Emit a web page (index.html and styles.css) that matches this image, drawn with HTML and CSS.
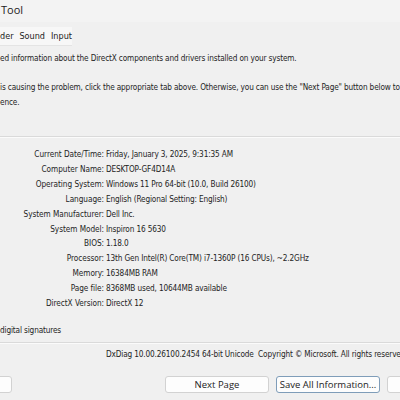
FILE: index.html
```html
<!DOCTYPE html>
<html lang="en">
<head>
  <meta charset="UTF-8">
  <title>DirectX Diagnostic Tool</title>
  <link rel="stylesheet" href="styles.css">
</head>
<body>
  <div class="dx-window">
    <!-- title bar -->
    <div class="dx-titlebar">Tool</div>
    <!-- tabs -->
    <div class="dx-tabs">
      <div class="dx-tabstrip">
        <span class="dx-tab">der</span>
        <span class="dx-tab">Sound</span>
        <span class="dx-tab">Input</span>
      </div>
    </div>
    <div class="dx-panel">
      <p class="dx-intro">ed information about the DirectX components and drivers installed on your system.</p>
      <p class="dx-help"> is causing the problem, click the appropriate tab above. Otherwise, you can use the "Next Page" button below to<br>ence.</p>
      <div class="dx-sep"></div>
      <div class="dx-info">
        <div class="dx-label">Current Date/Time:</div><div class="dx-value">Friday, January 3, 2025, 9:31:35 AM</div>
        <div class="dx-label">Computer Name:</div><div class="dx-value">DESKTOP-GF4D14A</div>
        <div class="dx-label">Operating System:</div><div class="dx-value">Windows 11 Pro 64-bit (10.0, Build 26100)</div>
        <div class="dx-label">Language:</div><div class="dx-value">English (Regional Setting: English)</div>
        <div class="dx-label">System Manufacturer:</div><div class="dx-value">Dell Inc.</div>
        <div class="dx-label">System Model:</div><div class="dx-value">Inspiron 16 5630</div>
        <div class="dx-label">BIOS:</div><div class="dx-value">1.18.0</div>
        <div class="dx-label">Processor:</div><div class="dx-value">13th Gen Intel(R) Core(TM) i7-1360P (16 CPUs), ~2.2GHz</div>
        <div class="dx-label">Memory:</div><div class="dx-value">16384MB RAM</div>
        <div class="dx-label">Page file:</div><div class="dx-value">8368MB used, 10644MB available</div>
        <div class="dx-label">DirectX Version:</div><div class="dx-value">DirectX 12</div>
      </div>
      <div class="dx-check">digital signatures</div>
      <div class="dx-sep dx-sep-low"></div>
      <div class="dx-copy">DxDiag 10.00.26100.2454 64-bit Unicode&nbsp; Copyright © Microsoft. All rights reserve</div>
    </div>
    <div class="dx-buttons">
      <button class="dx-btn dx-btn-cut" aria-label="Help"></button>
      <button class="dx-btn dx-btn-next">Next Page</button>
      <button class="dx-btn dx-btn-default">Save All Information...</button>
      <button class="dx-btn" aria-label="Exit"></button>
    </div>
  </div>
</body>
</html>
```

FILE: styles.css
```css
html, body { margin:0; padding:0; }
body {
  background:#f0f0f0;
  width:400px;
  height:400px;
  overflow:hidden;
  font-family:"DejaVu Sans Condensed","DejaVu Sans",sans-serif;
  font-stretch:condensed;
  font-size:8.2px;
  letter-spacing:-0.15px;
  color:#1e1e1e;
}
.dx-window { width:400px; }
.dx-titlebar {
  height:22px;
  line-height:20px;
  padding-left:1px;
  font-family:"Open Sans","Noto Sans",sans-serif;
  font-stretch:normal;
  letter-spacing:0;
  font-size:11px;
  color:#222;
  background:#f3f3f3;
}
.dx-tabs {
  height:24px;
  padding-top:5px;
  box-sizing:border-box;
}
.dx-tabstrip {
  display:flex;
  width:72px;
  height:19px;
  align-items:center;
  background:#f7f7f7;
  border-bottom:1px solid #e4e4e4;
  box-sizing:border-box;
}
.dx-tab { margin-right:6px; font-size:9px; letter-spacing:0; color:#222; }
.dx-panel { padding:0; }
.dx-intro { margin:5px 0 0 0; line-height:14px; }
.dx-help { margin:15px 0 0 0; line-height:15px; white-space:nowrap; }
.dx-sep {
  height:0;
  border-top:1px solid #dadada;
  border-bottom:1px solid #fbfbfb;
  margin-top:26px;
}
.dx-info {
  display:grid;
  grid-template-columns:104px 1fr;
  column-gap:2px;
  row-gap:0;
  margin-top:9px;
  line-height:14.9px;
}
.dx-label { text-align:right; white-space:nowrap; letter-spacing:-0.05px; }
.dx-value { white-space:nowrap; }
.dx-check { margin-top:12px; line-height:14px; }
.dx-sep-low { margin-top:5px; }
.dx-copy {
  margin-top:3px;
  padding-left:106px;
  line-height:14px;
  white-space:nowrap;
}
.dx-buttons {
  display:flex;
  gap:7px;
  margin-top:15px;
  align-items:center;
}
.dx-btn {
  flex:none;
  width:104px;
  height:17px;
  padding:0;
  background:#fdfdfd;
  border:1px solid #d2d2d2;
  border-radius:3px;
  font-family:"Open Sans","Noto Sans",sans-serif;
  font-stretch:normal;
  letter-spacing:0;
  font-size:9.5px;
  color:#222;
  box-sizing:border-box;
}
.dx-btn-cut { margin-left:-92px; }
.dx-btn-next { margin-left:146px; }
.dx-btn-default { border-color:#7f9db9; }
```
